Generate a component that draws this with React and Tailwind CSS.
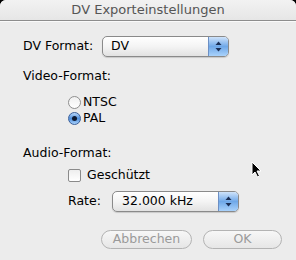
import React from "react";

const font = { fontFamily: '"DejaVu Sans", "Liberation Sans", sans-serif' };

function Select({ width, text, textPad }) {
  return (
    <div
      className="relative flex h-[21px] rounded-[5px] border border-[#8a8a8a] bg-gradient-to-b from-[#ffffff] via-[#f4f4f4] to-[#e2e2e2] shadow-[0_1px_1px_rgba(0,0,0,0.15)] overflow-hidden"
      style={{ width }}
    >
      <div className="flex-1 flex items-center text-[12.5px] text-black" style={{ paddingLeft: textPad }}>
        {text}
      </div>
      <div className="w-[20px] h-full flex items-center justify-center border-l border-[#6c8fc4] bg-gradient-to-b from-[#cfe3fa] via-[#6fa8e8] to-[#a9d2fb]">
        <svg width="7" height="11" viewBox="0 0 7 11">
          <path d="M3.5 0.5 L6.5 4 L0.5 4 Z" fill="#1b2f55" />
          <path d="M3.5 10.5 L6.5 7 L0.5 7 Z" fill="#1b2f55" />
        </svg>
      </div>
    </div>
  );
}

function Radio({ checked }) {
  return checked ? (
    <div className="w-[13px] h-[13px] rounded-full border border-[#3a5f9a] bg-gradient-to-b from-[#b9d8fb] via-[#4f8fdc] to-[#a6d0fb] flex items-center justify-center">
      <div className="w-[5px] h-[5px] rounded-full bg-[#0d1a33]" />
    </div>
  ) : (
    <div className="w-[13px] h-[13px] rounded-full border border-[#8f8f8f] bg-gradient-to-b from-[#f0f0f0] to-[#ffffff]" />
  );
}

export default function App() {
  return (
    <div className="w-[296px] h-[260px] bg-black" style={font}>
      <div className="w-full h-full rounded-t-[6px] bg-[#ececec] flex flex-col overflow-hidden relative">
        <div className="h-[21px] shrink-0 flex items-center justify-center text-[13px] text-[#555] bg-gradient-to-b from-[#f2f2f2] to-[#e6e6e6] border-b border-[#8d8d8d]">
          DV Exporteinstellungen
        </div>
        <div className="h-px bg-[#fafafa]" />

        <div className="flex items-center mt-[14px] pl-[23px] text-[12.5px] text-black">
          <span className="w-[79px]">DV Format:</span>
          <Select width="127px" text="DV" textPad="8px" />
        </div>

        <div className="mt-[11px] pl-[23px] text-[12.5px] h-[16px] leading-[16px] text-black">Video-Format:</div>

        <div className="mt-[10px] pl-[68px] flex flex-col text-[12.5px] text-black">
          <div className="flex items-center h-[16px] gap-[2px]">
            <Radio />
            <span>NTSC</span>
          </div>
          <div className="flex items-center h-[16px] gap-[2px]">
            <Radio checked />
            <span>PAL</span>
          </div>
        </div>

        <div className="mt-[19px] pl-[23px] text-[12.5px] h-[16px] leading-[16px] text-black">Audio-Format:</div>

        <div className="mt-[6px] pl-[68px] flex items-center h-[16px] gap-[6px] text-[12.5px] text-black">
          <div className="w-[13px] h-[13px] rounded-[2px] border border-[#8a8a8a] bg-gradient-to-b from-[#eeeeee] to-[#ffffff]" />
          <span>Geschützt</span>
        </div>

        <div className="mt-[8px] pl-[68px] flex items-center text-[12.5px] text-black">
          <span className="w-[44px]">Rate:</span>
          <Select width="127px" text="32.000 kHz" textPad="9px" />
        </div>

        <div className="mt-[18px] flex justify-end gap-[11px] pr-[14px] text-[12.5px]">
          <div className="w-[91px] h-[19px] rounded-full border border-[#b3b3b3] bg-gradient-to-b from-[#f7f7f7] to-[#e6e6e6] flex items-center justify-center text-[#9a9a9a]">
            Abbrechen
          </div>
          <div className="w-[79px] h-[19px] rounded-full border border-[#b3b3b3] bg-gradient-to-b from-[#f7f7f7] to-[#e6e6e6] flex items-center justify-center text-[#9a9a9a]">
            OK
          </div>
        </div>

        <svg className="absolute left-[251px] top-[161px]" width="11" height="17" viewBox="0 0 11 17">
          <path d="M1 1 L1 14 L4 11 L6.5 16 L8.5 15 L6 10 L10 10 Z" fill="#000" stroke="#fff" strokeWidth="1" />
        </svg>
      </div>
    </div>
  );
}
